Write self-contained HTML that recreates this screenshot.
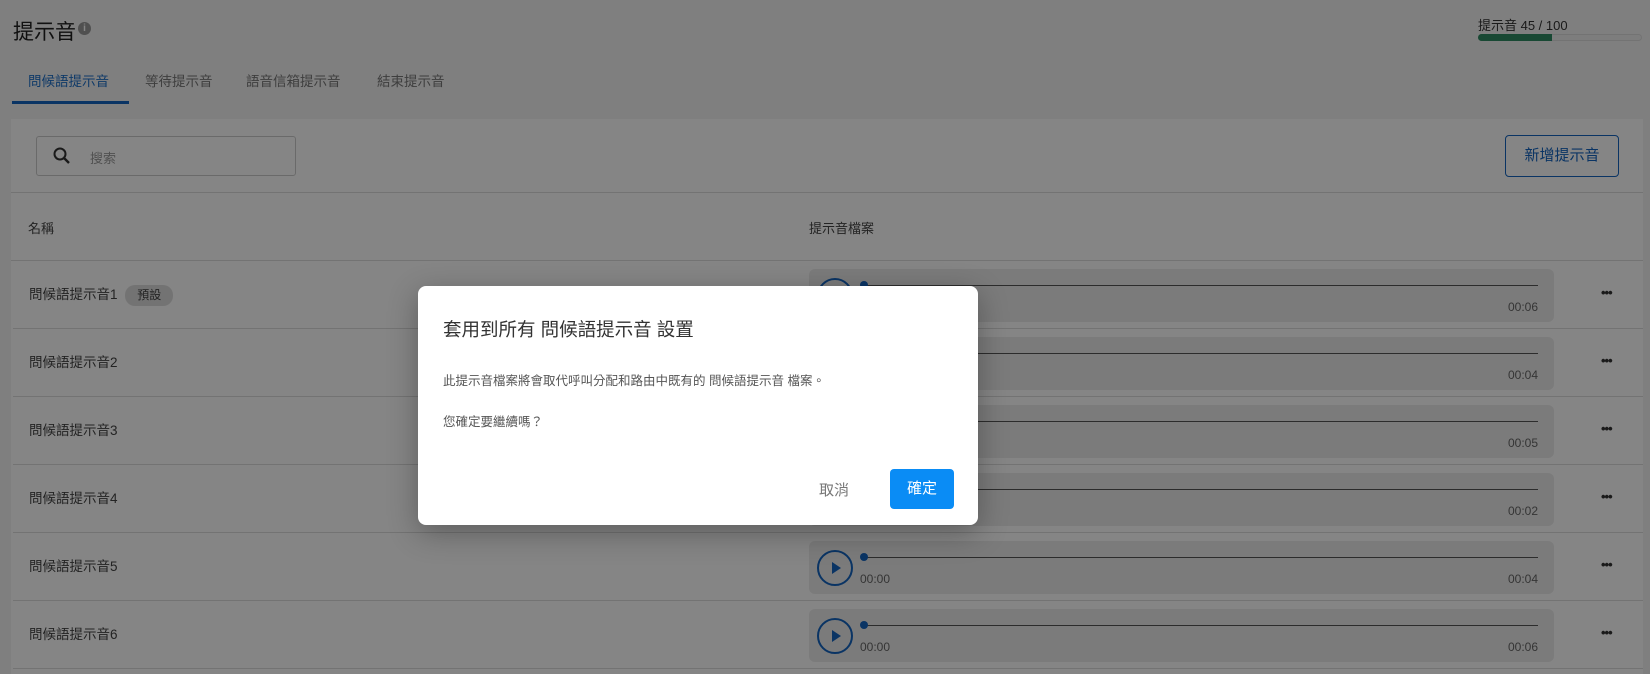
<!DOCTYPE html>
<html style="overflow:hidden"><head><meta charset="utf-8"><style>
*{box-sizing:border-box;margin:0;padding:0}
html,body{width:1650px;height:674px;overflow:hidden}
body{background:#f3f3f3;font-family:"Liberation Sans","Noto Sans CJK TC",sans-serif;position:relative;color:#333}
.a{position:absolute}
.row{position:absolute;left:13px;width:1630px;height:68px;border-bottom:1px solid #ddd}
.row .n{position:absolute;left:16px;top:0;line-height:68px;font-size:13.5px;color:#444}
.pl{position:absolute;left:796px;top:8px;width:745px;height:53px;background:#ececec;border-radius:6px}
.pl .c{position:absolute;left:8px;top:9px;width:36px;height:36px;border:2px solid #1565c0;border-radius:50%}
.pl .c:after{content:"";position:absolute;left:13px;top:10px;border-left:9px solid #1565c0;border-top:6px solid transparent;border-bottom:6px solid transparent}
.pl .ln{position:absolute;left:55px;right:16px;top:16px;height:1px;background:#555}
.pl .dt{position:absolute;left:51px;top:12px;width:8px;height:8px;border-radius:50%;background:#1565c0}
.pl .t0{position:absolute;left:51px;top:31px;font-size:12px;color:#666}
.pl .t1{position:absolute;right:16px;top:31px;font-size:12px;color:#666}
.dots{position:absolute;left:1588px;top:0;line-height:64px;font-size:13px;font-weight:bold;color:#333;letter-spacing:-1px}
.ov{position:absolute;left:0;top:0;width:1650px;height:674px;background:rgba(0,0,0,0.48)}
</style></head><body>
<div class="a" style="left:13px;top:16px;font-size:21px;color:#222">提示音</div>
<div class="a" style="left:78px;top:22px;width:13px;height:13px;border-radius:50%;background:#999;color:#fff;font-size:10px;text-align:center;line-height:13px;font-weight:bold">i</div>
<div class="a" style="left:1478px;top:15px;font-size:13px;color:#333">提示音 45 / 100</div>
<div class="a" style="left:1478px;top:34px;width:164px;height:7px;border-radius:4px;background:#f0f0f0;border:1px solid #ddd"></div>
<div class="a" style="left:1478px;top:34px;width:74px;height:7px;border-radius:4px 0 0 4px;background:#2e8a62"></div>
<div class="a" style="left:28px;top:70px;font-size:13.5px;color:#1e6fc8">問候語提示音</div>
<div class="a" style="left:145px;top:70px;font-size:13.5px;color:#777">等待提示音</div>
<div class="a" style="left:246px;top:70px;font-size:13.5px;color:#777">語音信箱提示音</div>
<div class="a" style="left:377px;top:70px;font-size:13.5px;color:#777">結束提示音</div>
<div class="a" style="left:12px;top:101px;width:117px;height:3px;background:#1565c0"></div>
<div class="a" style="left:11px;top:119px;width:1632px;height:555px;background:#fff"></div>
<div class="a" style="left:36px;top:136px;width:260px;height:40px;border:1px solid #ccc;border-radius:3px"></div>
<svg class="a" style="left:52px;top:146px" width="20" height="20" viewBox="0 0 20 20"><circle cx="8" cy="8" r="5.5" fill="none" stroke="#333" stroke-width="2"/><path d="M12 12l5 5" stroke="#333" stroke-width="2.4"/></svg>
<div class="a" style="left:90px;top:148px;font-size:13px;color:#999">搜索</div>
<div class="a" style="left:1505px;top:135px;width:114px;height:42px;border:1px solid #1565c0;border-radius:4px;color:#1565c0;font-size:15px;text-align:center;line-height:40px">新增提示音</div>
<div class="a" style="left:11px;top:192px;width:1632px;height:1px;background:#ddd"></div>
<div class="a" style="left:28px;top:218px;font-size:13px;color:#444">名稱</div>
<div class="a" style="left:809px;top:218px;font-size:13px;color:#444">提示音檔案</div>
<div class="a" style="left:11px;top:260px;width:1632px;height:1px;background:#ddd"></div>

<div class="row" style="top:261px"><div class="n">問候語提示音1 <span style="display:inline-block;background:#ddd;border-radius:10px;padding:0 12px;line-height:21px;font-size:12px;margin-left:4px">預設</span></div><div class="pl"><div class="c"></div><div class="ln"></div><div class="dt"></div><div class="t0">00:00</div><div class="t1">00:06</div></div><div class="dots">•••</div></div>
<div class="row" style="top:329px"><div class="n">問候語提示音2</div><div class="pl"><div class="c"></div><div class="ln"></div><div class="dt"></div><div class="t0">00:00</div><div class="t1">00:04</div></div><div class="dots">•••</div></div>
<div class="row" style="top:397px"><div class="n">問候語提示音3</div><div class="pl"><div class="c"></div><div class="ln"></div><div class="dt"></div><div class="t0">00:00</div><div class="t1">00:05</div></div><div class="dots">•••</div></div>
<div class="row" style="top:465px"><div class="n">問候語提示音4</div><div class="pl"><div class="c"></div><div class="ln"></div><div class="dt"></div><div class="t0">00:00</div><div class="t1">00:02</div></div><div class="dots">•••</div></div>
<div class="row" style="top:533px"><div class="n">問候語提示音5</div><div class="pl"><div class="c"></div><div class="ln"></div><div class="dt"></div><div class="t0">00:00</div><div class="t1">00:04</div></div><div class="dots">•••</div></div>
<div class="row" style="top:601px;height:68px"><div class="n">問候語提示音6</div><div class="pl"><div class="c"></div><div class="ln"></div><div class="dt"></div><div class="t0">00:00</div><div class="t1">00:06</div></div><div class="dots">•••</div></div>

<div class="ov"></div>
<div class="a" style="left:418px;top:286px;width:560px;height:239px;background:#fff;border-radius:8px;box-shadow:0 8px 30px rgba(0,0,0,0.3)">
<div class="a" style="left:25px;top:30px;font-size:18.5px;color:#333">套用到所有 問候語提示音 設置</div>
<div class="a" style="left:25px;top:84px;font-size:12.5px;color:#555">此提示音檔案將會取代呼叫分配和路由中既有的 問候語提示音 檔案。</div>
<div class="a" style="left:25px;top:125px;font-size:12.5px;color:#555">您確定要繼續嗎？</div>
<div class="a" style="left:401px;top:193px;font-size:15px;color:#777">取消</div>
<div class="a" style="left:472px;top:183px;width:64px;height:40px;background:#0a8cf5;border-radius:4px;color:#fff;font-size:15px;text-align:center;line-height:40px">確定</div>
</div>
</body></html>
